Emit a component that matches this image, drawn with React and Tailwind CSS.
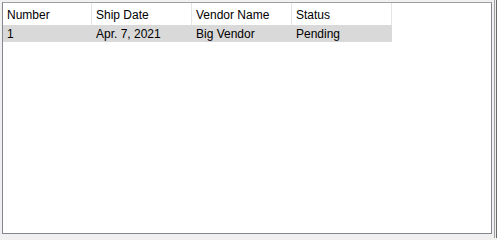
import React from "react";

const columns = [
  { key: "number", label: "Number", width: "w-[89px]" },
  { key: "shipDate", label: "Ship Date", width: "w-[100px]" },
  { key: "vendor", label: "Vendor Name", width: "w-[100px]" },
  { key: "status", label: "Status", width: "w-[100px]" },
];

const rows = [
  { number: "1", shipDate: "Apr. 7, 2021", vendor: "Big Vendor", status: "Pending" },
];

export default function App() {
  return (
    <div
      className="w-[497px] h-[240px] bg-[#f0f0f0] flex pt-[2px] pl-[2px] text-[12px] text-black"
      style={{ fontFamily: '"Liberation Sans", Arial, sans-serif' }}
    >
      {/* list view */}
      <div className="w-[490px] h-[232px] bg-white border border-[#828790] border-t-[#a0a0a0] flex flex-col">
        <div className="flex h-[22px] bg-white">
          {columns.map((c) => (
            <div
              key={c.key}
              className={`${c.width} h-full border-r border-[#e5e5e5] pl-[4px] pt-[2px] flex items-center`}
            >
              {c.label}
            </div>
          ))}
        </div>
        {rows.map((r) => (
          <div key={r.number} className="flex h-[17px] w-[389px] bg-[#d9d9d9]">
            {columns.map((c) => (
              <div key={c.key} className={`${c.width} pl-[4px] flex items-center`}>
                {r[c.key]}
              </div>
            ))}
          </div>
        ))}
      </div>
      {/* edge of the neighbouring control */}
      <div className="ml-[2px] w-[3px] h-[238px] -mt-[2px] border-l border-r border-[#a0a0a0] border-r-[#696969]" />
    </div>
  );
}
